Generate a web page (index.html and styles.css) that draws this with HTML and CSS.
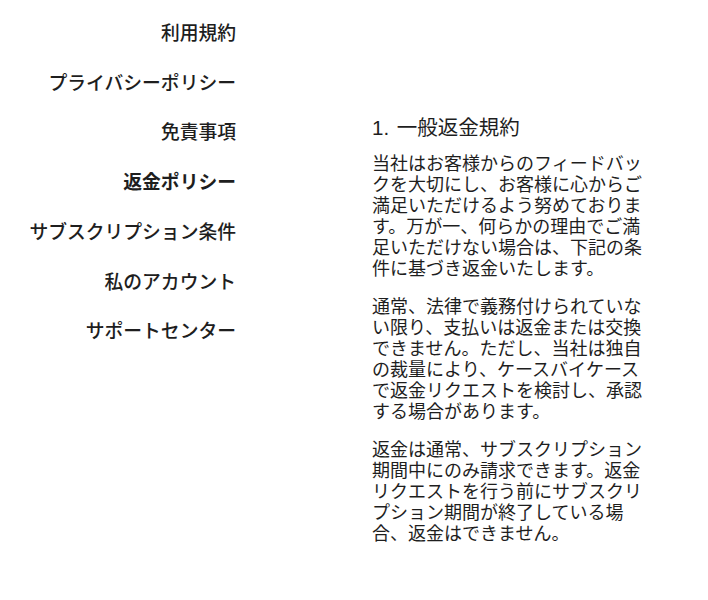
FILE: index.html
```html
<!DOCTYPE html>
<html lang="ja">
<head>
<meta charset="utf-8">
<title>返金ポリシー</title>
<link rel="stylesheet" href="styles.css">
</head>
<body>
<div class="page">
  <nav class="side-nav">
    <a class="nav-item" href="#">利用規約</a>
    <a class="nav-item" href="#">プライバシーポリシー</a>
    <a class="nav-item" href="#">免責事項</a>
    <a class="nav-item active" href="#">返金ポリシー</a>
    <a class="nav-item" href="#">サブスクリプション条件</a>
    <a class="nav-item" href="#">私のアカウント</a>
    <a class="nav-item" href="#">サポートセンター</a>
  </nav>
  <main class="content">
    <h2 class="section-title">1. 一般返金規約</h2>
    <p class="para">当社はお客様からのフィードバックを大切にし、お客様に心からご満足いただけるよう努めております。万が一、何らかの理由でご満足いただけない場合は、下記の条件に基づき返金いたします。</p>
    <p class="para">通常、法律で義務付けられていない限り、支払いは返金または交換できません。ただし、当社は独自の裁量により、ケースバイケースで返金リクエストを検討し、承認する場合があります。</p>
    <p class="para">返金は通常、サブスクリプション期間中にのみ請求できます。返金リクエストを行う前にサブスクリプション期間が終了している場合、返金はできません。</p>
  </main>
</div>
</body>
</html>
```

FILE: styles.css
```css
html, body {
  margin: 0;
  padding: 0;
  background: #ffffff;
}

body {
  font-family: "Liberation Sans", "Noto Sans CJK JP", sans-serif;
  color: #1e1e1e;
}

.page {
  display: flex;
  align-items: flex-start;
  gap: 136px;
}

.side-nav {
  width: 236px;
  flex: none;
  display: flex;
  flex-direction: column;
  align-items: flex-end;
  padding-top: 9px;
}

.nav-item {
  display: block;
  font-size: 18.8px;
  line-height: 49.7px;
  font-weight: 500;
  color: #1e1e1e;
  text-decoration: none;
  white-space: nowrap;
}

.nav-item.active {
  font-weight: 700;
}

.content {
  width: 280px;
  flex: none;
  padding-top: 116px;
}

.section-title {
  margin: 0 0 14px;
  font-size: 20.5px;
  line-height: 24px;
  font-weight: 400;
  word-spacing: 2px;
}

.para {
  margin: 0 0 17px;
  font-size: 18px;
  line-height: 21px;
  line-break: strict;
}
```
